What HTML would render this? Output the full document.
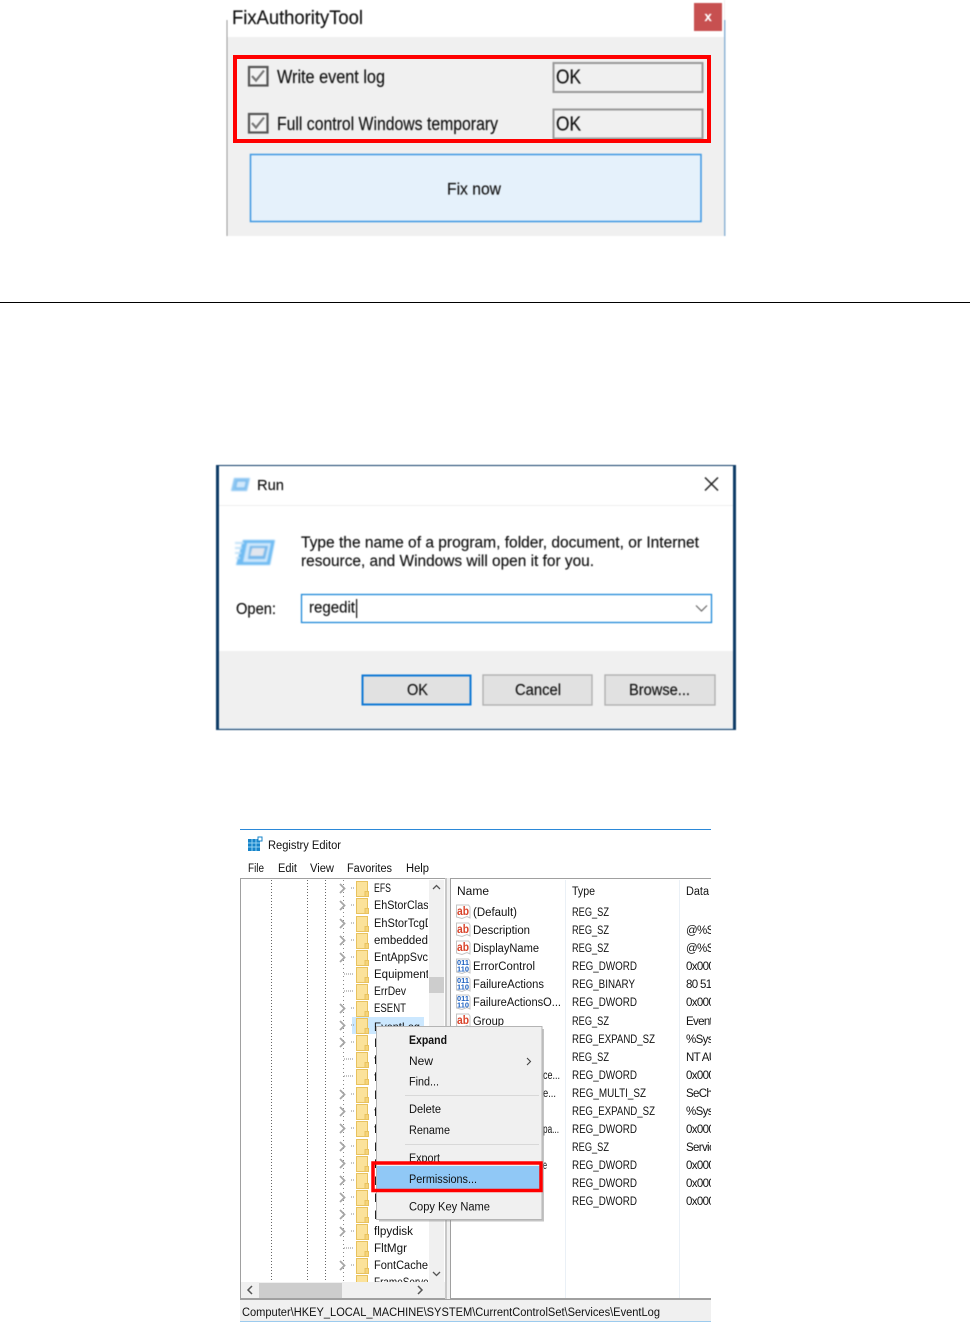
<!DOCTYPE html>
<html><head><meta charset="utf-8"><title>FixAuthorityTool</title>
<style>
html,body{margin:0;padding:0;background:#fff}
svg{display:block}
text{font-family:"Liberation Sans",sans-serif;fill:#111;white-space:pre}
.b1{filter:blur(.45px)}
.b1 text{stroke:#111;stroke-width:.15px}
.b2{filter:blur(.3px)}
.t11 text{font-size:11.5px}
.d text{letter-spacing:-.65px}
.soft{filter:blur(.7px)}
.ab{font-size:11.5px;fill:#d9432a;font-weight:700;stroke:none}
.t11 text.ab{font-size:11.5px;fill:#d9432a;font-weight:700}
.t11 text.bin{font-size:7.5px;fill:#1a5fc0;font-weight:700}
</style></head><body>
<svg width="970" height="1322" viewBox="0 0 970 1322" xmlns="http://www.w3.org/2000/svg">
<defs>
<symbol id="f" viewBox="0 0 13 16" width="13" height="16" overflow="visible">
<path d="M.5.5H11.5V15.5H.5Z" fill="#fbe29a" stroke="#e8c25e"/>
<path d="M9 10.5H12.5V15.5H9Z" fill="#f6d47a" stroke="#e8c25e"/>
</symbol>
<symbol id="c" viewBox="0 0 10 10" width="10" height="10" overflow="visible">
<path d="M2 0L6.5 4.5L2 9" fill="none" stroke="#a6a6a6" stroke-width="1.8"/>
</symbol>
<clipPath id="treeClip"><rect x="241" y="880" width="187" height="402"/></clipPath>
<clipPath id="dataClip"><rect x="451" y="880" width="260" height="420"/></clipPath>
</defs>

<!-- Top dialog -->
<g class="b1">
<rect x="227" y="0" width="498" height="236" fill="#f0f0f0"/>
<rect x="227" y="0" width="497" height="37" fill="#fff"/>
<rect x="226.500" y="20" width="1" height="216" fill="#9a9a9a"/>
<rect x="724" y="20" width="1.500" height="216" fill="#8fb4d6"/>
<text x="232" y="24" font-size="19" textLength="131" lengthAdjust="spacingAndGlyphs">FixAuthorityTool</text>
<rect x="694" y="3" width="28" height="28" fill="#c75050"/>
<text x="704.500" y="21" font-size="13" font-weight="700" style="fill:#fff;stroke:#fff">x</text>
<rect x="249" y="67" width="18.500" height="18.500" fill="#f4f4f4" stroke="#555" stroke-width="2.200"/>
<path d="M252 76l4 4.500 8-10" fill="none" stroke="#777" stroke-width="2.200"/>
<rect x="249" y="114" width="18.500" height="18.500" fill="#f4f4f4" stroke="#555" stroke-width="2.200"/>
<path d="M252 123l4 4.500 8-10" fill="none" stroke="#777" stroke-width="2.200"/>
<text x="277" y="83" font-size="18" textLength="108" lengthAdjust="spacingAndGlyphs">Write event log</text>
<text x="277" y="130" font-size="18" textLength="221" lengthAdjust="spacingAndGlyphs">Full control Windows temporary</text>
<rect x="553.500" y="63" width="149" height="29" fill="#f0f0f0" stroke="#999" stroke-width="2"/>
<rect x="553.500" y="109.500" width="149" height="29" fill="#f0f0f0" stroke="#999" stroke-width="2"/>
<text x="556" y="83.500" font-size="20" textLength="25" lengthAdjust="spacingAndGlyphs">OK</text>
<text x="556" y="130.500" font-size="20" textLength="25" lengthAdjust="spacingAndGlyphs">OK</text>
<rect x="250.500" y="154.500" width="450.500" height="67" fill="#e5f1fb" stroke="#3d97e2" stroke-width="1.500"/>
<text x="447" y="194.500" font-size="17" textLength="54" lengthAdjust="spacingAndGlyphs">Fix now</text>
</g>
<rect x="235" y="57" width="474" height="84" fill="none" stroke="#f00" stroke-width="4"/>

<rect x="0" y="302" width="970" height="1" fill="#000"/>

<!-- Run dialog -->
<g class="b1">
<rect x="216" y="465" width="520" height="265" fill="#0d3b66"/>
<rect x="219" y="466" width="514" height="263" fill="#fff"/>
<rect x="219" y="505" width="514" height="1" fill="#eeeeee"/>
<rect x="219" y="651" width="514" height="77" fill="#f0f0f0"/>
<rect x="219" y="728" width="514" height="1" fill="#cfe0ee"/>
<g class="soft">
<path d="M234 478H250L247 491H231Z" fill="#8cc6f2"/>
<path d="M237 481H246.500L245 488H235.500Z" fill="#d2e9fc" stroke="#6fb4ea"/>
<path d="M243 540H275L270 565H236Z" fill="#6fbbf2"/>
<path d="M247 543H271L267 562H243Z" fill="#cfe8fc"/>
<path d="M250 546H268L265 559H248Z" fill="#74b6ea"/>
<path d="M252 548H265L263 556H250Z" fill="#e2e6ee"/>
<path d="M235 543H244M235 548H242M235 553H241M236 558H240" stroke="#bfe0f8" stroke-width="2"/>
</g>
<text x="257" y="490" font-size="15" textLength="27" lengthAdjust="spacingAndGlyphs">Run</text>
<path d="M705 477.500L718 490.500M718 477.500L705 490.500" stroke="#222" stroke-width="1.500" fill="none"/>
<text x="301" y="547.500" font-size="15.500" textLength="398" lengthAdjust="spacingAndGlyphs">Type the name of a program, folder, document, or Internet</text>
<text x="301" y="566" font-size="15.500" textLength="293" lengthAdjust="spacingAndGlyphs">resource, and Windows will open it for you.</text>
<text x="236" y="614" font-size="15.500" textLength="40" lengthAdjust="spacingAndGlyphs">Open:</text>
<rect x="301.500" y="594.500" width="410" height="28" fill="#fff" stroke="#1e88d8" stroke-width="1.300"/>
<text x="309" y="612.500" font-size="15.500" textLength="46" lengthAdjust="spacingAndGlyphs">regedit</text>
<rect x="356" y="599" width="1.200" height="19" fill="#111"/>
<path d="M696 605.500L701.500 611L707 605.500" fill="none" stroke="#666" stroke-width="1.200"/>
<rect x="362.500" y="675.500" width="108" height="29" fill="#e1e1e1" stroke="#0f78d4" stroke-width="2"/>
<rect x="483" y="675" width="109" height="30" fill="#e1e1e1" stroke="#adadad" stroke-width="1.300"/>
<rect x="605" y="675" width="110" height="30" fill="#e1e1e1" stroke="#adadad" stroke-width="1.300"/>
<text x="407" y="695" font-size="15.500" textLength="21" lengthAdjust="spacingAndGlyphs">OK</text>
<text x="515" y="695" font-size="15.500" textLength="46" lengthAdjust="spacingAndGlyphs">Cancel</text>
<text x="629" y="695" font-size="15.500" textLength="61" lengthAdjust="spacingAndGlyphs">Browse...</text>
</g>

<!-- Registry Editor -->
<g class="b2 t11">
<rect x="240" y="829" width="471" height="1" fill="#2b88d8"/>
<rect x="248" y="839" width="12" height="12" fill="#1683c9"/>
<path d="M252 839v12M256 839v12M248 843h12M248 847h12" stroke="#8fd0f2" stroke-width="1"/>
<rect x="258" y="837" width="4" height="4" fill="#fff" stroke="#1683c9"/>
<text x="268" y="849" textLength="73" lengthAdjust="spacingAndGlyphs">Registry Editor</text>
<text x="248" y="872" textLength="16" lengthAdjust="spacingAndGlyphs">File</text>
<text x="278" y="872" textLength="19" lengthAdjust="spacingAndGlyphs">Edit</text>
<text x="310" y="872" textLength="24" lengthAdjust="spacingAndGlyphs">View</text>
<text x="347" y="872" textLength="45" lengthAdjust="spacingAndGlyphs">Favorites</text>
<text x="406" y="872" textLength="23" lengthAdjust="spacingAndGlyphs">Help</text>

<!-- left pane -->
<rect x="240.500" y="878.500" width="205" height="420" fill="#fff" stroke="#a0a0a0"/>
<rect x="445" y="878" width="5" height="422" fill="#f0f0f0"/>
<rect x="445.500" y="878" width="1" height="421" fill="#a0a0a0"/>
<rect x="241" y="1282" width="204" height="16" fill="#f0f0f0"/>
<rect x="429" y="880" width="15" height="402" fill="#f0f0f0"/>
<rect x="429" y="977" width="15" height="16" fill="#cdcdcd"/>
<path d="M433 889L436.500 885.500L440 889M433 1272L436.500 1275.500L440 1272" fill="none" stroke="#555" stroke-width="1.300"/>
<rect x="259" y="1283" width="83" height="15" fill="#cdcdcd"/>
<path d="M252 1286L248 1290L252 1294M418 1286L422 1290L418 1294" fill="none" stroke="#555" stroke-width="1.500"/>
<g clip-path="url(#treeClip)">
<path d="M271.500 880V1282M307.500 880V1282M325.500 880V1282" stroke="#666" stroke-dasharray="1 2"/>
<path d="M343.500 880V1282" stroke="#888" stroke-dasharray="1 3"/>
<rect x="352" y="1017" width="72" height="17" fill="#cce8ff"/>
<path d="M351 888h3M351 905h3M351 923h3M351 940h3M351 957h3M351 1008h3M351 1025h3M351 1042h3M351 1094h3M351 1111h3M351 1128h3M351 1146h3M351 1163h3M351 1180h3M351 1197h3M351 1214h3M351 1231h3M351 1265h3" stroke="#888" stroke-dasharray="1 1"/>
<path d="M344 974h10M344 991h10M344 1059h10M344 1076h10M344 1248h10" stroke="#888" stroke-dasharray="1 1"/>
<use href="#c" x="338" y="884"/><use href="#c" x="338" y="901"/><use href="#c" x="338" y="919"/><use href="#c" x="338" y="936"/><use href="#c" x="338" y="953"/><use href="#c" x="338" y="1004"/><use href="#c" x="338" y="1021"/><use href="#c" x="338" y="1038"/><use href="#c" x="338" y="1090"/><use href="#c" x="338" y="1107"/><use href="#c" x="338" y="1124"/><use href="#c" x="338" y="1142"/><use href="#c" x="338" y="1159"/><use href="#c" x="338" y="1176"/><use href="#c" x="338" y="1193"/><use href="#c" x="338" y="1210"/><use href="#c" x="338" y="1227"/><use href="#c" x="338" y="1261"/>
<use href="#f" x="356" y="881"/><use href="#f" x="356" y="898"/><use href="#f" x="356" y="916"/><use href="#f" x="356" y="933"/><use href="#f" x="356" y="950"/><use href="#f" x="356" y="967"/><use href="#f" x="356" y="984"/><use href="#f" x="356" y="1001"/><use href="#f" x="356" y="1018"/><use href="#f" x="356" y="1035"/><use href="#f" x="356" y="1052"/><use href="#f" x="356" y="1069"/><use href="#f" x="356" y="1087"/><use href="#f" x="356" y="1104"/><use href="#f" x="356" y="1121"/><use href="#f" x="356" y="1139"/><use href="#f" x="356" y="1156"/><use href="#f" x="356" y="1173"/><use href="#f" x="356" y="1190"/><use href="#f" x="356" y="1207"/><use href="#f" x="356" y="1224"/><use href="#f" x="356" y="1241"/><use href="#f" x="356" y="1258"/><use href="#f" x="356" y="1275"/>
<text x="374" y="892" textLength="17" lengthAdjust="spacingAndGlyphs">EFS</text>
<text x="374" y="909" textLength="60" lengthAdjust="spacingAndGlyphs">EhStorClass</text>
<text x="374" y="927" textLength="68" lengthAdjust="spacingAndGlyphs">EhStorTcgDrv</text>
<text x="374" y="944" textLength="54" lengthAdjust="spacingAndGlyphs">embedded</text>
<text x="374" y="961" textLength="54" lengthAdjust="spacingAndGlyphs">EntAppSvc</text>
<text x="374" y="978" textLength="55" lengthAdjust="spacingAndGlyphs">Equipment</text>
<text x="374" y="995" textLength="32" lengthAdjust="spacingAndGlyphs">ErrDev</text>
<text x="374" y="1012" textLength="32" lengthAdjust="spacingAndGlyphs">ESENT</text>
<text x="374" y="1031" textLength="46" lengthAdjust="spacingAndGlyphs">EventLog</text>
<text x="374" y="1047">I</text><text x="374" y="1064">f</text><text x="374" y="1081">f</text><text x="374" y="1099">I</text><text x="374" y="1116">f</text><text x="374" y="1133">f</text><text x="374" y="1151">I</text><text x="374" y="1168">f</text><text x="374" y="1185">I</text><text x="374" y="1202">I</text><text x="374" y="1219">I</text>
<text x="374" y="1235" textLength="39" lengthAdjust="spacingAndGlyphs">flpydisk</text>
<text x="374" y="1252" textLength="33" lengthAdjust="spacingAndGlyphs">FltMgr</text>
<text x="374" y="1269" textLength="54" lengthAdjust="spacingAndGlyphs">FontCache</text>
<text x="374" y="1286" textLength="58" lengthAdjust="spacingAndGlyphs">FrameServer</text>
</g>

<!-- right pane -->
<rect x="450.500" y="878.500" width="270" height="420" fill="#fff" stroke="#a0a0a0"/>
<rect x="565" y="880" width="1" height="418" fill="#eaf0f6"/>
<rect x="679" y="880" width="1" height="418" fill="#eaf0f6"/>
<rect x="711" y="825" width="20" height="497" fill="#fff"/>
<g clip-path="url(#dataClip)">
<text x="457" y="895" textLength="32" lengthAdjust="spacingAndGlyphs">Name</text>
<text x="572" y="895" textLength="23" lengthAdjust="spacingAndGlyphs">Type</text>
<text x="686" y="895" textLength="23" lengthAdjust="spacingAndGlyphs">Data</text>

<path d="M456.500 905H468.500L470 907V918L467 916.500L462 918.500L456.500 917Z" fill="#fff" stroke="#c4c4c4"/>
<text class="ab" x="457" y="915" textLength="12" lengthAdjust="spacingAndGlyphs">ab</text>
<path d="M456.500 923H468.500L470 925V936L467 934.500L462 936.500L456.500 935Z" fill="#fff" stroke="#c4c4c4"/>
<text class="ab" x="457" y="933" textLength="12" lengthAdjust="spacingAndGlyphs">ab</text>
<path d="M456.500 941H468.500L470 943V954L467 952.500L462 954.500L456.500 953Z" fill="#fff" stroke="#c4c4c4"/>
<text class="ab" x="457" y="951" textLength="12" lengthAdjust="spacingAndGlyphs">ab</text>
<path d="M456.500 959H468.500L470 961V973L467 971.500L462 973.500L456.500 972Z" fill="#fff" stroke="#c4c4c4"/>
<text class="bin" x="457" y="965" textLength="12" lengthAdjust="spacingAndGlyphs">011</text>
<text class="bin" x="457" y="971.500" textLength="12" lengthAdjust="spacingAndGlyphs">110</text>
<path d="M456.500 977H468.500L470 979V991L467 989.500L462 991.500L456.500 990Z" fill="#fff" stroke="#c4c4c4"/>
<text class="bin" x="457" y="983" textLength="12" lengthAdjust="spacingAndGlyphs">011</text>
<text class="bin" x="457" y="989.500" textLength="12" lengthAdjust="spacingAndGlyphs">110</text>
<path d="M456.500 995H468.500L470 997V1009L467 1007.500L462 1009.500L456.500 1008Z" fill="#fff" stroke="#c4c4c4"/>
<text class="bin" x="457" y="1001" textLength="12" lengthAdjust="spacingAndGlyphs">011</text>
<text class="bin" x="457" y="1007.500" textLength="12" lengthAdjust="spacingAndGlyphs">110</text>
<path d="M456.500 1014H468.500L470 1016V1027L467 1025.500L462 1027.500L456.500 1026Z" fill="#fff" stroke="#c4c4c4"/>
<text class="ab" x="457" y="1024" textLength="12" lengthAdjust="spacingAndGlyphs">ab</text>

<text x="473" y="916" textLength="44" lengthAdjust="spacingAndGlyphs">(Default)</text>
<text x="473" y="934" textLength="57" lengthAdjust="spacingAndGlyphs">Description</text>
<text x="473" y="952" textLength="66" lengthAdjust="spacingAndGlyphs">DisplayName</text>
<text x="473" y="970" textLength="62" lengthAdjust="spacingAndGlyphs">ErrorControl</text>
<text x="473" y="988" textLength="71" lengthAdjust="spacingAndGlyphs">FailureActions</text>
<text x="473" y="1006" textLength="88" lengthAdjust="spacingAndGlyphs">FailureActionsO...</text>
<text x="473" y="1025" textLength="31" lengthAdjust="spacingAndGlyphs">Group</text>
<text x="543" y="1079" textLength="17" lengthAdjust="spacingAndGlyphs">ce...</text>
<text x="543" y="1097" textLength="13" lengthAdjust="spacingAndGlyphs">e...</text>
<text x="543" y="1133" textLength="16" lengthAdjust="spacingAndGlyphs">pa...</text>
<text x="543" y="1169" textLength="4" lengthAdjust="spacingAndGlyphs">e</text>

<text x="572" y="916" textLength="37" lengthAdjust="spacingAndGlyphs">REG_SZ</text>
<text x="572" y="934" textLength="37" lengthAdjust="spacingAndGlyphs">REG_SZ</text>
<text x="572" y="952" textLength="37" lengthAdjust="spacingAndGlyphs">REG_SZ</text>
<text x="572" y="970" textLength="65" lengthAdjust="spacingAndGlyphs">REG_DWORD</text>
<text x="572" y="988" textLength="63" lengthAdjust="spacingAndGlyphs">REG_BINARY</text>
<text x="572" y="1006" textLength="65" lengthAdjust="spacingAndGlyphs">REG_DWORD</text>
<text x="572" y="1025" textLength="37" lengthAdjust="spacingAndGlyphs">REG_SZ</text>
<text x="572" y="1043" textLength="83" lengthAdjust="spacingAndGlyphs">REG_EXPAND_SZ</text>
<text x="572" y="1061" textLength="37" lengthAdjust="spacingAndGlyphs">REG_SZ</text>
<text x="572" y="1079" textLength="65" lengthAdjust="spacingAndGlyphs">REG_DWORD</text>
<text x="572" y="1097" textLength="74" lengthAdjust="spacingAndGlyphs">REG_MULTI_SZ</text>
<text x="572" y="1115" textLength="83" lengthAdjust="spacingAndGlyphs">REG_EXPAND_SZ</text>
<text x="572" y="1133" textLength="65" lengthAdjust="spacingAndGlyphs">REG_DWORD</text>
<text x="572" y="1151" textLength="37" lengthAdjust="spacingAndGlyphs">REG_SZ</text>
<text x="572" y="1169" textLength="65" lengthAdjust="spacingAndGlyphs">REG_DWORD</text>
<text x="572" y="1187" textLength="65" lengthAdjust="spacingAndGlyphs">REG_DWORD</text>
<text x="572" y="1205" textLength="65" lengthAdjust="spacingAndGlyphs">REG_DWORD</text>

<g class="d">
<text x="686" y="934">@%SystemRoot%</text>
<text x="686" y="952">@%SystemRoot%</text>
<text x="686" y="970">0x00000001</text>
<text x="686" y="988">80 51 01 00</text>
<text x="686" y="1006">0x00000001</text>
<text x="686" y="1025">Event Log</text>
<text x="686" y="1043">%SystemRoot%</text>
<text x="686" y="1061">NT AUTHORITY</text>
<text x="686" y="1079">0x00000001</text>
<text x="686" y="1097">SeChangeNotify</text>
<text x="686" y="1115">%SystemRoot%</text>
<text x="686" y="1133">0x00000001</text>
<text x="686" y="1151">Service</text>
<text x="686" y="1169">0x00000001</text>
<text x="686" y="1187">0x00000001</text>
<text x="686" y="1205">0x00000001</text>
</g>
</g>

<!-- status bar -->
<rect x="240" y="1299" width="471" height="1" fill="#a0a0a0"/>
<rect x="240" y="1300" width="471" height="21" fill="#f0f0f0"/>
<rect x="240" y="1321" width="471" height="1" fill="#9ccbee"/>
<text x="242" y="1316" textLength="418" lengthAdjust="spacingAndGlyphs">Computer\HKEY_LOCAL_MACHINE\SYSTEM\CurrentControlSet\Services\EventLog</text>

<!-- context menu -->
<rect x="379" y="1029" width="165" height="192.500" fill="#8a8a8a" opacity=".5"/>
<rect x="376.500" y="1026.500" width="165.500" height="193" fill="#f0f0f0" stroke="#b4b4b4"/>
<text x="409" y="1044" font-weight="700" textLength="38" lengthAdjust="spacingAndGlyphs">Expand</text>
<text x="409" y="1065" textLength="24" lengthAdjust="spacingAndGlyphs">New</text>
<path d="M527 1058L530.500 1061.500L527 1065" fill="none" stroke="#444" stroke-width="1.100"/>
<text x="409" y="1085.500" textLength="30" lengthAdjust="spacingAndGlyphs">Find...</text>
<rect x="405" y="1095" width="134" height="1" fill="#d8d8d8"/>
<text x="409" y="1113" textLength="32" lengthAdjust="spacingAndGlyphs">Delete</text>
<text x="409" y="1134" textLength="41" lengthAdjust="spacingAndGlyphs">Rename</text>
<rect x="405" y="1144" width="134" height="1" fill="#d8d8d8"/>
<text x="409" y="1162" textLength="31" lengthAdjust="spacingAndGlyphs">Export</text>
<rect x="377" y="1166" width="164" height="24" fill="#90c8f6"/>
<text x="409" y="1183" textLength="68" lengthAdjust="spacingAndGlyphs">Permissions...</text>
<text x="409" y="1210.500" textLength="81" lengthAdjust="spacingAndGlyphs">Copy Key Name</text>
</g>
<rect x="373" y="1163" width="168" height="27.500" fill="none" stroke="#f00" stroke-width="3.500"/>
</svg>
</body></html>
